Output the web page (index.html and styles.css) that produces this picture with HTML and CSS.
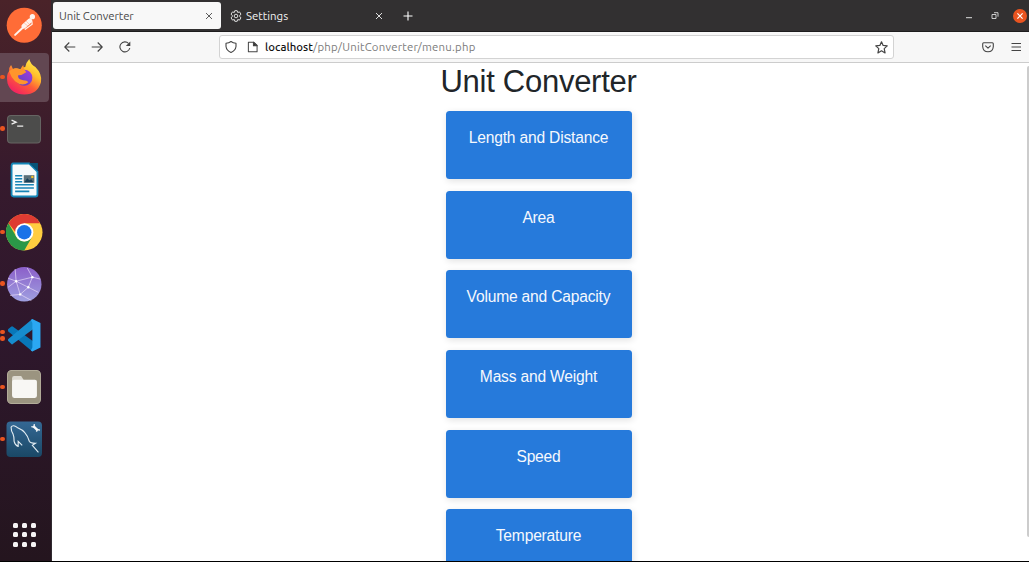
FILE: index.html
```html
<!DOCTYPE html>
<html lang="en">
<head>
<meta charset="utf-8">
<title>Unit Converter</title>
<link rel="stylesheet" href="styles.css">
</head>
<body>
<div class="desktop">
  <nav class="dock">
    <div class="app"><svg viewBox="0 0 36 36"><circle cx="18" cy="18" r="17.300" fill="#ff6c37"/><g stroke="#fff3ed" fill="none" stroke-linecap="round"><circle cx="26" cy="9.500" r="2" fill="#fff3ed" stroke-width="1.200"/><path d="M23.500 13.500L17.500 19" stroke-width="4.600"/><path d="M16.500 20.500L9 27.500" stroke-width="2"/><path d="M25.500 14L25.800 17L19 22" stroke-width="1.200"/></g><path d="M18 16l4 3M20 14l3 3" stroke="#ffae8f" stroke-width=".6"/></svg></div>
    <div class="app active"><i class="dot"></i><svg viewBox="0 0 36 36"><defs><linearGradient id="fox" x1=".85" y1="0" x2=".2" y2="1"><stop offset="0" stop-color="#fff44f"/><stop offset=".35" stop-color="#ffbd2b"/><stop offset=".62" stop-color="#ff5b38"/><stop offset="1" stop-color="#f01a68"/></linearGradient><linearGradient id="globe" x1="1" y1="0" x2="0" y2="1"><stop offset="0" stop-color="#a63be0"/><stop offset="1" stop-color="#5544bb"/></linearGradient></defs><path d="M5 6L7 10Q10 8 14 10Q16 8 19 8Q20 3 23 0Q24 5 29 8Q36 15 34.500 23Q31 35 18 35Q5 35 1.500 24Q0 15 3 12Q3 8 5 6Z" fill="url(#fox)"/><circle cx="18" cy="18.500" r="8" fill="url(#globe)"/><path d="M3 12Q9 7 14 11Q15 8 17 6Q17 10 20 13Q16 16 12 16Q11 20 17 21Q21 21 22 23Q16 28 9 22Q5 18 3 12Z" fill="#ff952c"/></svg></div>
    <div class="app"><i class="dot"></i><svg viewBox="0 0 36 36"><rect x="1.500" y="4.500" width="32.500" height="27" rx="3.500" fill="#4c4c4b" stroke="#666563"/><path d="M5.500 9l4.500 2-4.500 2M11 15h6" stroke="#eee" stroke-width="1.300" fill="none"/></svg></div>
    <div class="app"><svg viewBox="0 0 36 36"><path d="M7 1.500H23L31 9.500V32Q31 34 29 34H7.500Q5.500 34 5.500 32V4Q5.500 1.500 7 1.500Z" fill="#f7fafb" stroke="#1588b9" stroke-width="1.800"/><path d="M22.500 1H31.500V9Z" fill="#075477"/><path d="M9 13.500h7M9 16.500h7M9 19.500h7M9 22.500h18.500M9 25.700h18.500M9 29h14" stroke="#1784b6" stroke-width="1.600"/><rect x="17.500" y="13" width="10.500" height="7.500" fill="#5b7078"/><path d="M18 20l3-4 2 2 2-1 2 3Z" fill="#173f58"/><circle cx="26" cy="14.700" r="1.200" fill="#f5c329"/></svg></div>
    <div class="app"><i class="dot"></i><svg viewBox="0 0 36 36"><circle cx="18" cy="18" r="18" fill="#ffcd40"/><path d="M2.400 9A18 18 0 0 1 33.600 9H18L12 21Z" fill="#de3b32"/><path d="M2.400 9L10.200 22.500A9 9 0 0 0 25.800 22.500L18 36A18 18 0 0 1 2.400 9Z" fill="#2b9848"/><circle cx="18" cy="18" r="9" fill="#fff"/><circle cx="18" cy="18" r="7.100" fill="#1a73e8"/></svg></div>
    <div class="app"><i class="dot"></i><svg viewBox="0 0 36 36"><defs><linearGradient id="net" x1="0" y1="0" x2="0" y2="1"><stop stop-color="#8b5fc9"/><stop offset="1" stop-color="#9fa0e0"/></linearGradient></defs><circle cx="18" cy="18" r="17" fill="url(#net)"/><path d="M9 3L10 15L2 21M10 15L22 21L32 26M22 21L26 11L21 2M26 11L34 13M10 15L26 11M10 15L14 28L4 29M22 21L14 28L25 34M2 12L10 15" stroke="#e5d7f7" stroke-width=".7" fill="none"/><g fill="#fff"><circle cx="10" cy="15" r="1.200"/><circle cx="26" cy="11" r="1.200"/><circle cx="22" cy="21" r="1.200"/><circle cx="14" cy="28" r="1.200"/></g></svg></div>
    <div class="app"><i class="dot up"></i><i class="dot down"></i><svg viewBox="0 0 36 36"><path d="M2 12L5 9.500Q6 8.500 7 9.500L28 25L26 34L2 14Z" fill="#0877b9"/><path d="M2 23.500L5 26.500Q6 27.500 7 26.500L28 11L26 2L2 22Z" fill="#168cce"/><path d="M26 2L34 6V30L26 34L24.500 33L26 30V6L24.500 3Z" fill="#2ba8f2"/></svg></div>
    <div class="app"><i class="dot"></i><svg viewBox="0 0 36 36"><rect x="1.500" y="1.500" width="32.500" height="32.500" rx="4" fill="#9b9480" stroke="#b3ad9a"/><path d="M6 9Q6 7 8 7H15L17 10V26H6Z" fill="#dedbd2"/><rect x="6" y="10.500" width="24.500" height="18" rx="2" fill="#f8f7f4"/></svg></div>
    <div class="app"><i class="dot"></i><svg viewBox="0 0 36 36"><defs><linearGradient id="sql" x1="0" y1="0" x2="0" y2="1"><stop stop-color="#346894"/><stop offset="1" stop-color="#1a4866"/></linearGradient></defs><rect x=".5" y=".5" width="35" height="35" rx="4" fill="url(#sql)"/><path d="M5 6Q7 3 12 7Q20 10 23 20Q24 22 29 22L26 24L32 31M5 6Q5 10 7 13Q8 15 8 20Q9 24 12 25L12 20L16 24" fill="none" stroke="#e3edf3" stroke-width="1.100"/><path d="M27 5L31 9" stroke="#f4f6f8" stroke-width="2.400"/><path d="M25 5.500L27.500 6L28 3M30 10.500L31 8.500L33.500 9" stroke="#f4f6f8" stroke-width="1.300" fill="none"/></svg></div>
    <div class="launcher"><i></i><i></i><i></i><i></i><i></i><i></i><i></i><i></i><i></i></div>
  </nav>
  <main class="browser">
    <header class="tabbar">
      <div class="tab selected"><span class="tab-title one">Unit Converter</span><svg class="x" viewBox="0 0 8 8"><path d="M1 1l6 6M7 1l-6 6"/></svg></div>
      <div class="tab"><svg class="gear" viewBox="0 0 12 12"><path d="M4.800 .7H7.200L7.700 2.500L9.500 1.900L11 4.200L9.700 5.400V6.600L11 7.800L9.500 10.100L7.700 9.500L7.200 11.300H4.800L4.300 9.500L2.500 10.100L1 7.800L2.300 6.600V5.400L1 4.200L2.500 1.900L4.300 2.500Z"/><circle cx="6" cy="6" r="1.800"/></svg><span class="tab-title two">Settings</span><svg class="x" viewBox="0 0 8 8"><path d="M1 1l6 6M7 1l-6 6"/></svg></div>
      <svg class="plus" viewBox="0 0 10 10"><path d="M5 .5v9M.5 5h9"/></svg>
      <div class="window-controls">
        <svg viewBox="0 0 14 14"><path d="M4 8.700h6"/></svg>
        <svg viewBox="0 0 14 14"><path d="M4 5.500h4v4H4zM6 3.700h4v4" stroke-width=".9"/></svg>
        <svg viewBox="0 0 14 14"><circle cx="7" cy="7" r="7" fill="#e95420" stroke="none"/><path d="M4.400 4.400l5.200 5.200M9.600 4.400l-5.200 5.200" stroke="#fff" stroke-width="1.200"/></svg>
      </div>
    </header>
    <div class="toolbar">
      <div class="nav-buttons">
        <svg viewBox="0 0 12 12"><path d="M11.300 6H1M5.300 1.500L.8 6l4.500 4.500"/></svg>
        <svg viewBox="0 0 12 12"><path d="M.7 6H11M6.700 1.500L11.200 6l-4.500 4.500"/></svg>
        <svg viewBox="0 0 12 12"><path d="M10.800 7A5 5 0 1 1 9.600 2.500"/><path d="M11.300 .5V5H6.800Z" fill="#444" stroke="none"/></svg>
      </div>
      <div class="address">
        <svg viewBox="0 0 12 12"><path d="M6 .5Q8 2 11 2.300V5.500Q10.500 9.700 6 11.500Q1.500 9.700 1 5.500V2.300Q4 2 6 .5Z"/></svg>
        <svg class="page" viewBox="0 0 12 12"><path d="M1.500 .8h6L11 4.300v7H1.500z"/><path d="M7 .8v3.700h4Z" fill="#333"/></svg>
        <span class="url"><b>localhost</b>/php/UnitConverter/menu.php</span>
        <svg class="star" viewBox="0 0 12 12"><path d="M6 .7L7.500 4.100L11.300 4.500L8.500 7L9.300 11L6 9L2.700 11L3.500 7L.7 4.500L4.500 4.100Z"/></svg>
      </div>
      <svg class="pocket" viewBox="0 0 12 12"><path d="M1.700 1.700h8.600q1 0 1 1v3q-.5 5-5.300 5.100Q1.200 10.700.7 5.700v-3q0-1 1-1zM3.300 4.700L6 7.200l2.700-2.500"/></svg>
      <svg class="menu" viewBox="0 0 12 12"><path d="M1.500 2.500h9.500M1.500 6h9.500M1.500 9.500h9.500"/></svg>
    </div>
    <section class="content">
      <h1>Unit Converter</h1>
      <div class="cards">
        <a class="card">Length and Distance</a>
        <a class="card">Area</a>
        <a class="card">Volume and Capacity</a>
        <a class="card">Mass and Weight</a>
        <a class="card">Speed</a>
        <a class="card">Temperature</a>
      </div>
      <i class="scrollbar"></i>
    </section>
  </main>
</div>
</body>
</html>
```
FILE: styles.css
```css
* { box-sizing: border-box; }
body { margin: 0; overflow: hidden; }
svg { display: block; flex: none; }
.desktop { width: 1029px; height: 562px; display: flex; background: #000; overflow: hidden; }
.dock {
  width: 52px; height: 561px; padding-top: 1px; display: flex; flex-direction: column;
  background: linear-gradient(#4a2329 0%, #421f2a 14%, #361a2d 32%, #2e172c 60%, #24151e 100%);
  border-right: 1px solid #302a30;
}
.app { position: relative; flex: none; width: 49px; height: 49px; margin-bottom: 2.700px; display: flex; align-items: center; justify-content: center; border-radius: 0 4px 4px 0; }
.app svg { width: 36.500px; height: 36.500px; }
.active { background: #624752; }
.dot { position: absolute; left: 0; top: 22px; width: 4.500px; height: 4.500px; border-radius: 50%; background: #e95420; }
.dot.up { top: 18.500px; }
.dot.down { top: 25px; }
.launcher { display: grid; grid-template-columns: repeat(3, 5px); gap: 4.200px; margin: 57px 0 0 13px; }
.launcher i { width: 5px; height: 5px; border-radius: 1.500px; background: #f6f4f5; }
.browser { width: 977px; height: 561px; display: flex; flex-direction: column; background: #fff; }
.tabbar { height: 32px; flex: none; display: flex; align-items: center; background: #323031; border-bottom: 1px solid #1d1c1d; padding-left: 1px; color: #f3f3f3; }
.tab { height: 27px; display: flex; align-items: center; width: 171px; padding: 0 9px 0 10px; font: 11.400px/27px Ubuntu, "Noto Sans", sans-serif; }
.selected { width: 168px; padding: 0 8px 0 6px; border-radius: 3px; background: #f8f8f8; color: #4a4a4a; }
.tab-title { white-space: nowrap; }
.one { letter-spacing: -.06px; }
.two { letter-spacing: .02px; }
.x { width: 8px; height: 8px; margin-left: auto; fill: none; stroke: currentColor; stroke-width: .9; }
.gear { width: 12px; height: 12px; margin-right: 4px; margin-left: -1px; fill: none; stroke: #ddd; stroke-width: 1; }
.plus { width: 10px; height: 10px; margin-left: 11px; fill: none; stroke: #fff; stroke-width: 1.100; }
.window-controls { display: flex; gap: 11.500px; margin-left: auto; margin-right: 2px; }
.window-controls svg { width: 14px; height: 14px; fill: none; stroke: #ddd; }
.toolbar { height: 31px; flex: none; display: flex; align-items: center; background: #f7f7f7; border-bottom: 1px solid #ccc; padding: 0 7px 0 12px; }
.toolbar svg { width: 12px; height: 12px; fill: none; stroke: #444; stroke-width: 1.100; stroke-linejoin: round; }
.nav-buttons { display: flex; gap: 15.300px; width: 155px; flex: none; }
.address { display: flex; align-items: center; width: 675px; height: 24px; padding: 0 5px; background: #fff; border: 1px solid #d3d3d3; border-radius: 3px; }
.toolbar .page { width: 11px; margin-left: 10px; }
.url { margin-left: 7px; color: #7c7c7c; font: 11.400px/22px Ubuntu, "Noto Sans", sans-serif; white-space: nowrap; letter-spacing: .23px; }
.url b { font-weight: 500; color: #111; letter-spacing: .05px; }
.toolbar .star { width: 13px; height: 13px; margin-left: auto; }
.pocket { margin-left: 88px; }
.menu { margin-left: auto; }
.content { position: relative; height: 498px; overflow: hidden; background: #fff; padding-right: 4px; font-family: "Liberation Sans", Arial, sans-serif; }
h1 { margin: 0; height: 48px; font-size: 31px; font-weight: 400; line-height: 37px; text-align: center; color: #212529; letter-spacing: -.27px; }
.cards { display: flex; flex-direction: column; align-items: center; gap: 11.600px; }
.card { flex: none; width: 186px; height: 68.100px; padding-top: 18px; border-radius: 3.500px; background: #267adb; color: #f5f8fd; text-align: center; font-size: 15.600px; line-height: 18px; letter-spacing: -.19px; box-shadow: 1px 2px 7px rgba(0,0,0,.12); }
.scrollbar { position: absolute; right: 0; top: 3px; width: 2px; height: 471px; background: #ccc; border-radius: 2px 0 0 2px; }
```
